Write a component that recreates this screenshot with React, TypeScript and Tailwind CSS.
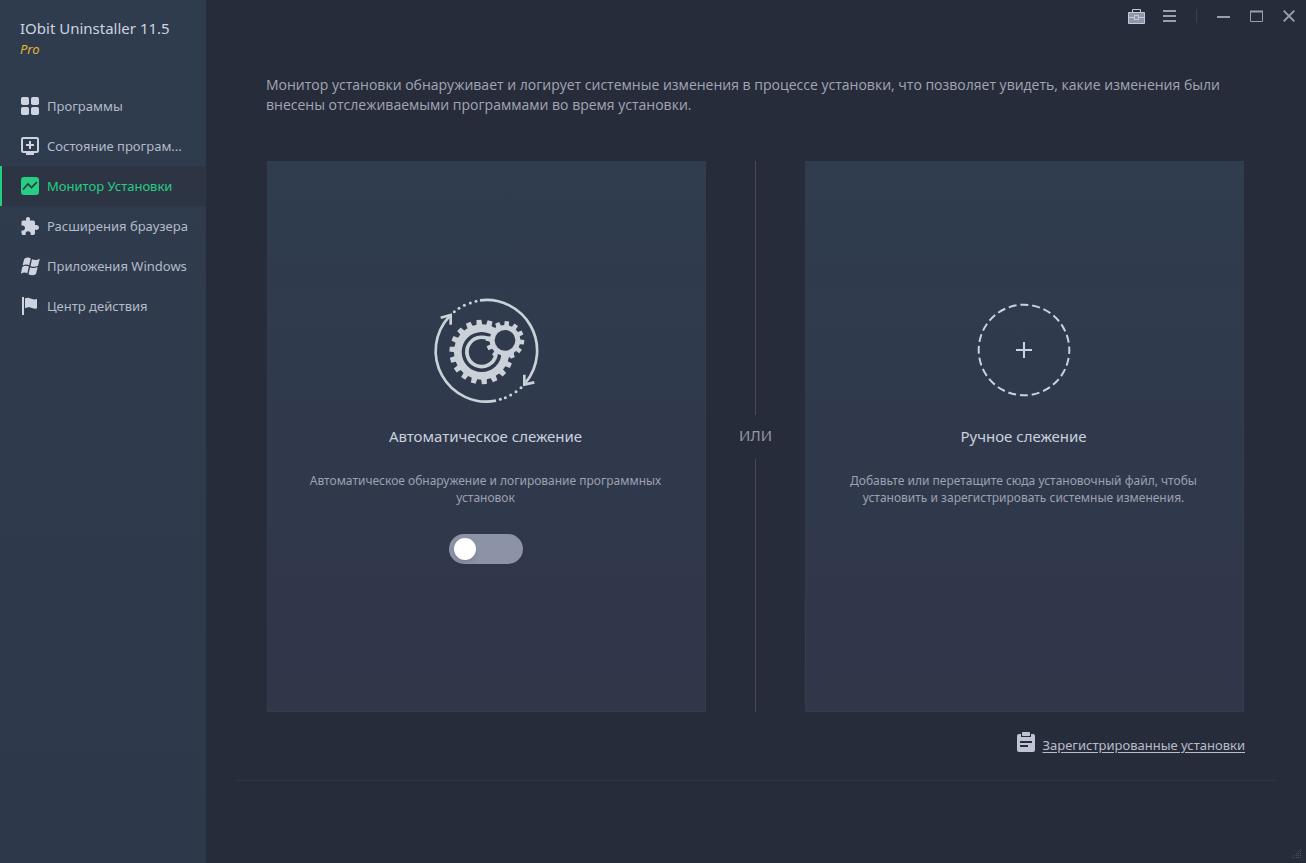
import { useState, type ReactNode } from 'react'

interface NavItem {
  id: string
  label: string
  icon: ReactNode
}

// outline of a gear with square teeth
function gearPath(cx: number, cy: number, outer: number, root: number, teeth: number, offset = 0) {
  const step = (Math.PI * 2) / teeth
  const points: string[] = []
  for (let i = 0; i < teeth; i++) {
    const a = i * step + offset
    const corners = [
      [root, -0.29],
      [outer, -0.22],
      [outer, 0.22],
      [root, 0.29],
    ]
    corners.forEach(([r, t]) => {
      points.push(`${(cx + r * Math.cos(a + t * step)).toFixed(2)} ${(cy + r * Math.sin(a + t * step)).toFixed(2)}`)
    })
  }
  return `M${points.join('L')}Z`
}

const navItems: NavItem[] = [
  {
    id: 'programs',
    label: 'Программы',
    icon: (
      <svg viewBox="0 0 18 18" className="size-[18px] shrink-0" fill="currentColor">
        <rect width="8" height="8" rx="1.8" />
        <rect x="10" width="8" height="8" rx="1.8" />
        <rect y="10" width="8" height="8" rx="1.8" />
        <rect x="10" y="10" width="8" height="8" rx="1.8" />
      </svg>
    ),
  },
  {
    id: 'health',
    label: 'Состояние програм...',
    icon: (
      <svg viewBox="0 0 18 18" className="size-[18px] shrink-0" fill="none" stroke="currentColor" strokeWidth="2">
        <rect x="1" y="1" width="16" height="14" rx="1.2" />
        <path d="M5 8h8M9 4v8M5 17h8" />
      </svg>
    ),
  },
  {
    id: 'monitor',
    label: 'Монитор Установки',
    icon: (
      <svg viewBox="0 0 18 18" className="size-[18px] shrink-0">
        <rect width="18" height="18" rx="3" fill="currentColor" />
        <path d="M2 12.500L7 7L10.500 10.500L16 5" fill="none" stroke="#2b3343" strokeWidth="1.6" />
      </svg>
    ),
  },
  {
    id: 'extensions',
    label: 'Расширения браузера',
    icon: (
      <svg viewBox="0 0 18 18" className="size-[18px] shrink-0" fill="currentColor">
        <path d="M0.5 5Q0.5 3.4 2 3.4H5.2C4.4 1.4 5.4 0 7 0S9.700 1.400 8.900 3.400H12.300Q14 3.400 14 5V8.200C16 7.500 18 8.600 18 10.500S16 13.400 14 12.600V16.200Q14 18 12.300 18H9.600C10.200 15.700 9 14.300 7.100 14.300S4.100 15.700 4.700 18H2Q0.500 18 0.500 16.300V13.400C2.700 13.800 4 12.600 4 10.900S2.700 8.100 0.500 8.500Z" />
      </svg>
    ),
  },
  {
    id: 'apps',
    label: 'Приложения Windows',
    icon: (
      <svg viewBox="0 0 19 19" className="-mr-px size-[19px] shrink-0" fill="currentColor">
        <path d="M3.200 2Q6.500 -0.500 9.800 1.400L8.200 8.200Q5 6.500 1.600 8.600Z" />
        <path d="M11 2.200Q14.800 4 18.800 1.700L17 8.700Q13.300 10.700 9.500 8.900Z" />
        <path d="M1.300 10Q4.600 7.700 7.900 9.500L6.300 16.200Q3.200 14.600 -0.200 16.800Z" />
        <path d="M9.200 10.200Q12.800 12 16.700 10L15 16.900Q11.400 19.200 7.500 17.200Z" />
      </svg>
    ),
  },
  {
    id: 'action',
    label: 'Центр действия',
    icon: (
      <svg viewBox="0 0 18 18" className="size-[18px] shrink-0" fill="currentColor">
        <path d="M1 0h2v18H1zM4 1.200C7 0 8.500 1 10.500 1.800S14 2.500 16 2V11.200C13.500 12.200 11.800 11.500 10 10.800S7 10.200 4 11.200Z" />
      </svg>
    ),
  },
]

function Sidebar({ active, onSelect }: { active: string; onSelect: (id: string) => void }) {
  return (
    <aside className="w-[206px] shrink-0 bg-linear-to-b from-[#2f3c4e] via-[#2f3b4d] to-[#2d394a]">
      <div className="h-[86px] pt-4 pl-5">
        <h1 className="text-[15px] leading-6 text-[#cdd3e0]">IObit Uninstaller 11.5</h1>
        <p className="text-[13px] leading-[18px] italic text-[#e5b52e]">Pro</p>
      </div>
      <nav>
        {navItems.map((item) => (
          <button
            key={item.id}
            onClick={() => onSelect(item.id)}
            className={
              item.id === active
                ? 'flex h-10 w-full items-center gap-2 border-l-2 border-[#1fd07e] bg-[#2d3545] pr-3 pl-[19px] text-[#27cd83]'
                : 'flex h-10 w-full items-center gap-2 border-l-2 border-transparent pr-3 pl-[19px] text-[#cdd3e0]'
            }
          >
            {item.icon}
            <span className={item.id === active ? 'truncate pt-0.5 text-[13px]' : 'truncate pt-0.5 text-[13px] text-[#b4bac8]'}>
              {item.label}
            </span>
          </button>
        ))}
      </nav>
    </aside>
  )
}

function TitleBar() {
  return (
    <header className="flex h-8 justify-end text-[#9a9eb2]">
      <button aria-label="Инструменты" className="flex w-[33px] items-center justify-center">
        <svg viewBox="0 0 17 16" className="h-4 w-[17px]" fill="none" stroke="#c3c9d9">
          <path d="M0.500 4.500H16.500V15.500H0.500Z" fill="#8f96a9" />
          <path d="M4.500 4V1.500H12.500V4M1 9.500H6M11 9.500H16" />
          <rect x="6.500" y="7.500" width="4" height="4" fill="#8f96a9" />
        </svg>
      </button>
      <button aria-label="Меню" className="flex w-[33px] items-center justify-center">
        <svg viewBox="0 0 13 12" className="h-3 w-[13px]" fill="currentColor">
          <path d="M0 0h13v2H0zM0 5h13v2H0zM0 10h13v2H0z" />
        </svg>
      </button>
      <div className="flex w-[21px] items-center justify-center">
        <div className="h-3.5 w-px bg-[#3b3f51]" />
      </div>
      <button aria-label="Свернуть" className="flex w-[33px] items-center justify-center">
        <svg viewBox="0 0 13 12" className="h-3 w-[13px]" fill="currentColor">
          <path d="M0 6h13v2H0z" />
        </svg>
      </button>
      <button aria-label="Развернуть" className="flex w-[33px] items-center justify-center">
        <svg viewBox="0 0 13 12" className="h-3 w-[13px]" fill="none" stroke="currentColor">
          <path d="M0.500 1.500H12.500V11.500H0.500Z" />
          <path d="M0 1.500H13" strokeWidth="2" />
        </svg>
      </button>
      <button aria-label="Закрыть" className="flex w-[33px] items-center justify-center">
        <svg viewBox="0 0 13 12" className="h-3 w-[13px]" fill="none" stroke="currentColor" strokeWidth="1.9">
          <path d="M0.700 0.700L11.300 11.300M11.300 0.700L0.700 11.300" />
        </svg>
      </button>
    </header>
  )
}

function GearsIcon() {
  return (
    <svg viewBox="0 0 366 366" className="size-[122px] text-[#cbd1d8]" fill="none" stroke="currentColor" strokeWidth="8">
      <mask id="small-gear-hole">
        <rect width="366" height="366" fill="#fff" stroke="none" />
        <circle cx="240" cy="151" r="31" fill="#000" stroke="none" />
      </mask>
      <path d="M165 31A152 152 0 0 1 302 278" />
      <path d="M213 332A152 152 0 0 1 73 79" />
      <path d="M47 83L77 75V104" />
      <path d="M298 254V284L328 277" />
      <g fill="currentColor" stroke="none">
        {[[88, 65], [102, 55], [118, 46], [136, 39], [153, 34], [226, 328], [241, 323], [257, 315], [273, 305], [288, 293]].map(([x, y]) => (
          <circle key={x} cx={x} cy={y} r="4.500" />
        ))}
      </g>
      <g mask="url(#small-gear-hole)">
        <path
          fill="currentColor"
          stroke="none"
          fillRule="evenodd"
          d={`${gearPath(170, 186, 97, 83, 18, 0.09)}M230 186A60 60 0 1 0 110 186A60 60 0 1 0 230 186Z`}
        />
        <path d="M203 157A44 44 0 1 0 213 194" strokeWidth="11" />
        <path fill="currentColor" stroke="none" d={gearPath(240, 151, 58, 46, 12, 0.1)} />
      </g>
    </svg>
  )
}

function DropIcon() {
  return (
    <svg viewBox="0 0 122 122" className="size-[122px] text-[#cbd1e0]" fill="none" stroke="currentColor" strokeWidth="2">
      <circle cx="61" cy="60" r="45.300" strokeDasharray="8 3.860" strokeDashoffset="4" />
      <path d="M53 60h16M61 52v16" />
    </svg>
  )
}

function Card({ icon, title, text, children }: { icon: ReactNode; title: string; text: string; children?: ReactNode }) {
  return (
    <section className="flex flex-1 flex-col items-center border border-[#343c4f] bg-linear-to-b from-[#2f3d4e] via-[#30394c] to-[#313649] pt-32 pr-[34px] pl-8">
      {icon}
      <h2 className="mt-3 text-[15px] leading-6 text-[#cbd0dc]">{title}</h2>
      <p className="mt-6 text-center text-xs leading-[17px] text-[#9ca2b1]">{text}</p>
      {children}
    </section>
  )
}

export default function App() {
  const [active, setActive] = useState('monitor')
  const [tracking, setTracking] = useState(false)

  return (
    <div className="flex min-h-screen bg-[#282c3c] font-['Noto_Sans','Open_Sans',sans-serif]">
      <Sidebar active={active} onSelect={setActive} />

      <main className="flex min-w-0 flex-1 flex-col bg-[#272c3b]">
        <TitleBar />

        <p className="mt-[43px] px-[60px] font-['Open_Sans','Noto_Sans',sans-serif] text-sm leading-5 text-[#a2a6b3]">
          Монитор установки обнаруживает и логирует системные изменения в процессе установки, что позволяет увидеть,
          какие изменения были внесены отслеживаемыми программами во время установки.
        </p>

        <div className="mt-[46px] mr-[62px] ml-[61px] flex flex-1">
          <Card
            icon={<GearsIcon />}
            title="Автоматическое слежение"
            text="Автоматическое обнаружение и логирование программных установок"
          >
            <input
              type="checkbox"
              role="switch"
              aria-label="Автоматическое слежение"
              checked={tracking}
              onChange={(e) => setTracking(e.target.checked)}
              className="mt-7 flex h-[30px] w-[74px] appearance-none items-center rounded-full bg-[#8d93a6] px-[5px] before:size-[22px] before:rounded-full before:bg-white before:shadow-md checked:justify-end checked:bg-[#1fd07e]"
            />
          </Card>

          <div className="flex w-[99px] flex-col items-center">
            <div className="w-px flex-1 bg-[#464958]" />
            <span className="pt-2 pb-3 text-[15px] leading-6 text-[#9598a6]">ИЛИ</span>
            <div className="w-px flex-1 bg-[#464958]" />
          </div>

          <Card
            icon={<DropIcon />}
            title="Ручное слежение"
            text="Добавьте или перетащите сюда установочный файл, чтобы установить и зарегистрировать системные изменения."
          />
        </div>

        <div className="mt-5 mr-[61px] flex h-6 justify-end">
          <a href="#log" className="flex items-start gap-2 text-[13px] text-[#b9bdc9]">
            <svg viewBox="0 0 18 20" className="h-5 w-[18px] text-[#bfc4d4]" fill="currentColor">
              <path d="M2 2H4V5H14V2H16Q18 2 18 4V18Q18 20 16 20H2Q0 20 0 18V4Q0 2 2 2Z" />
              <rect x="5" width="8" height="4" rx="0.800" />
              <path d="M3 10h12M3 14h8" stroke="#282c3c" strokeWidth="2" />
            </svg>
            <span className="pt-1 underline underline-offset-2">Зарегистрированные установки</span>
          </a>
        </div>

        <footer className="mx-[30px] mt-6 flex h-[83px] items-end justify-end border-t border-[#303445]">
          <svg viewBox="0 0 10 10" className="-mr-[26px] mb-1 size-2.5" fill="#4a4e5e">
            {[0, 1, 2, 3, 4].map((row) =>
              Array.from({ length: row + 1 }, (_, i) => (
                <rect key={`${row}-${i}`} x={8 - i * 2} y={row * 2} width="1" height="1" />
              )),
            )}
          </svg>
        </footer>
      </main>
    </div>
  )
}
